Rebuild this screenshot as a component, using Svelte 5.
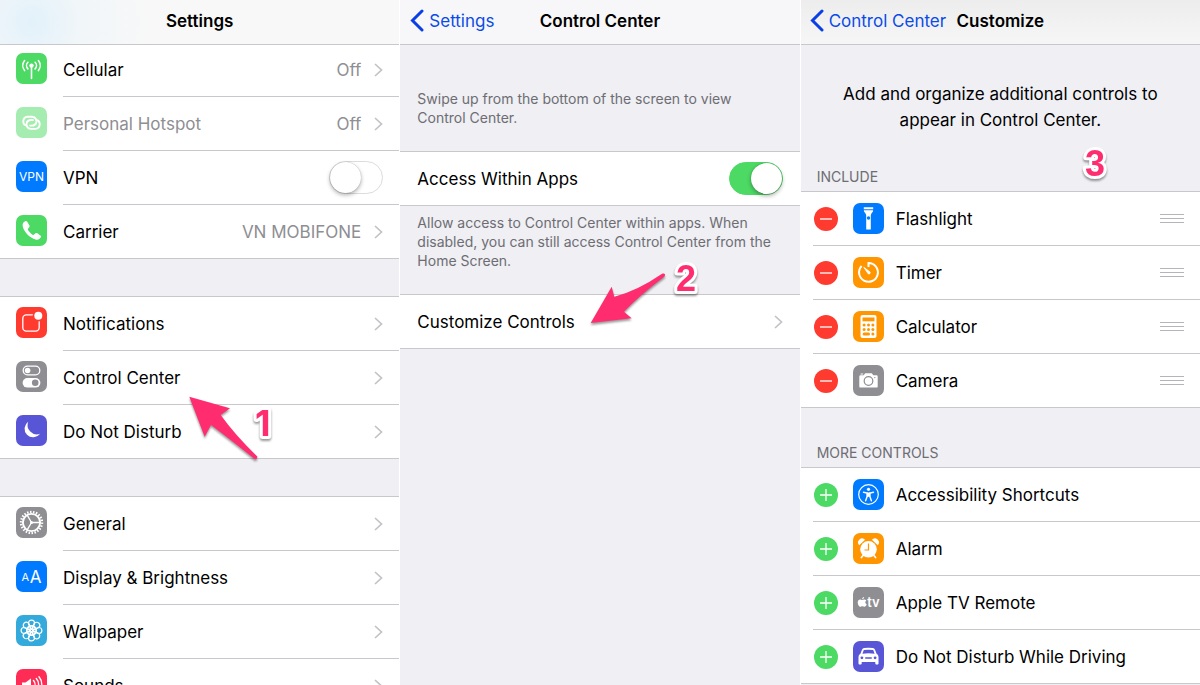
<script>
  const groups = [
    [
      { name: 'Cellular', icon: 'cellular', color: '#4cd964', value: 'Off' },
      { name: 'Personal Hotspot', icon: 'hotspot', color: '#a5ecb1', value: 'Off', dim: true },
      { name: 'VPN', icon: 'vpn', color: '#007aff', toggle: true },
      { name: 'Carrier', icon: 'phone', color: '#4cd964', value: 'VN MOBIFONE' }
    ],
    [
      { name: 'Notifications', icon: 'notifications', color: '#ff3b30' },
      { name: 'Control Center', icon: 'control', color: '#8e8e93' },
      { name: 'Do Not Disturb', icon: 'moon', color: '#5856d6' }
    ],
    [
      { name: 'General', icon: 'gear', color: '#8e8e93' },
      { name: 'Display & Brightness', icon: 'display', color: '#007aff' },
      { name: 'Wallpaper', icon: 'wallpaper', color: '#34aadc' },
      { name: 'Sounds', icon: 'sounds', color: '#ff2d55' }
    ]
  ];

  const included = [
    { name: 'Flashlight', icon: 'flashlight', color: '#007aff' },
    { name: 'Timer', icon: 'timer', color: '#ff9500' },
    { name: 'Calculator', icon: 'calculator', color: '#ff9500' },
    { name: 'Camera', icon: 'camera', color: '#8e8e93' }
  ];

  const more = [
    { name: 'Accessibility Shortcuts', icon: 'accessibility', color: '#007aff' },
    { name: 'Alarm', icon: 'alarm', color: '#ff9500' },
    { name: 'Apple TV Remote', icon: 'appletv', color: '#8e8e93' },
    { name: 'Do Not Disturb While Driving', icon: 'car', color: '#5856d6' }
  ];

  const petals = [0, 45, 90, 135, 180, 225, 270, 315];
  const link = 'M10.6 18.7a4.6 4.6 0 0 1 .9-9h4.6a4.6 4.6 0 0 1 4 6.600q-1.200 2.300-4 2.300h-2';

  let vpn = $state(false);
  let withinApps = $state(true);
</script>

{#snippet glyph(name, color)}
  <svg class="icon" viewBox="0 0 31 31" aria-hidden="true">
    <rect width="31" height="31" rx="7" fill={color} />
    {#if name === 'cellular'}
      <circle cx="15.5" cy="12.6" r="2.2" fill="#fff" />
      <path d="M15.5 13v12.4" class="line" stroke-width="1.6" />
      <path d="M11.900 9.300a4.700 4.700 0 0 0 0 6.600M19.100 9.300a4.700 4.700 0 0 1 0 6.600M8.600 7.600a8 8 0 0 0 0 10M22.400 7.600a8 8 0 0 1 0 10" class="line" stroke-width="1.6" />
    {:else if name === 'hotspot'}
      <g class="line" stroke-width="1.9">
        <path d={link} />
        <path d={link} transform="rotate(180 15.5 15.8)" />
      </g>
    {:else if name === 'vpn'}
      <text x="15.5" y="20" class="glyph-text" font-size="12">VPN</text>
    {:else if name === 'phone'}
      <path d="M9.2 6.300c-2 1-3 2.500-2.500 5 1.200 5.700 7.100 11.800 12.900 13.200 2.500.6 4-.4 5.200-2.200.5-.8.3-1.400-.4-1.900l-3-2.100c-.8-.5-1.500-.5-2.100.1l-1.200 1.200c-.5.5-1 .5-1.600.1-1.800-1.200-3.400-2.900-4.500-4.700-.4-.6-.3-1.100.2-1.600l1-1.100c.5-.6.6-1.200.1-2l-1.900-3.300c-.5-.8-1.300-1.200-2.200-.7z" fill="#fff" />
    {:else if name === 'notifications'}
      <rect x="6.8" y="7.8" width="16.4" height="16.4" rx="3.6" class="line" stroke-width="1.3" />
      <circle cx="22.3" cy="8.8" r="5.6" fill={color} />
      <circle cx="22.3" cy="8.8" r="4" fill="#fff" />
    {:else if name === 'control'}
      <rect x="7.2" y="5.2" width="16.6" height="8.6" rx="4.3" class="line" stroke-width="1.3" />
      <circle cx="11.6" cy="9.5" r="2.8" fill="#fff" />
      <rect x="6.6" y="17" width="17.8" height="9.6" rx="4.8" fill="#fff" />
      <circle cx="19.2" cy="21.8" r="3.3" fill={color} />
    {:else if name === 'moon'}
      <path d="M12.2 6.7a8.600 8.600 0 1 0 11.900 12.100A9.300 9.300 0 0 1 12.200 6.700z" fill="#fff" />
    {:else if name === 'gear'}
      <circle cx="15.5" cy="15.5" r="10.5" class="line teeth" stroke-width="2.4" pathLength="44" stroke-dasharray="1 1" />
      <circle cx="15.5" cy="15.5" r="8.6" class="line" stroke-width="1.900" />
      <path d="M15.5 15.5h8.500M15.5 15.5l-4.300-7.400M15.5 15.5l-4.300 7.400" class="line" stroke-width="1.3" />
      <circle cx="15.5" cy="15.5" r="1.5" fill="#fff" />
    {:else if name === 'display'}
      <text x="9.3" y="20" class="glyph-text" font-size="11">A</text>
      <text x="19.5" y="22" class="glyph-text" font-size="17">A</text>
    {:else if name === 'wallpaper'}
      <g class="line" stroke-width="1.2">
        {#each petals as angle}
          <g transform="rotate({angle} 15.5 15.5)">
            <circle cx="15.5" cy="8.100" r="3" />
            <circle cx="15.5" cy="12" r="1.4" />
          </g>
        {/each}
        <circle cx="15.5" cy="15.5" r="1.2" />
      </g>
    {:else if name === 'sounds'}
      <path d="M6 13.500h3.500l5.500-4v12l-5.500-4H6z" fill="#fff" />
      <path d="M17.500 11.500a6 6 0 0 1 0 8M20.300 9.500a9 9 0 0 1 0 12M23 7.800a12 12 0 0 1 0 15.400" class="line" stroke-width="1.4" />
    {:else if name === 'flashlight'}
      <path d="M10.800 4.200h9.400v2.100h-9.400zM10.800 7.300h9.400c0 2-2.400 3.200-2.400 5.200v14h-4.600v-14c0-2-2.400-3.200-2.400-5.200z" fill="#fff" />
      <circle cx="15.5" cy="15" r="1.7" fill={color} />
    {:else if name === 'timer'}
      <path d="M15.500 10V6a9.400 9.400 0 1 1-6.900 3" class="line teeth" stroke-width="2" />
      <path d="M10.800 10.300l6.200 4.700a1.300 1.300 0 0 1-1.800 1.800z" fill="#fff" stroke="#fff" stroke-width=".8" />
    {:else if name === 'calculator'}
      <rect x="7.5" y="4" width="16" height="23" rx="2" fill="#fff" />
      <g fill={color}>
        <rect x="9.5" y="6.5" width="12" height="3.8" />
        {#each [11.1, 15.5, 19.9] as x}
          <circle cx={x} cy="14" r="1.5" />
          <circle cx={x} cy="18.5" r="1.5" />
        {/each}
        <rect x="9.6" y="21.5" width="7.4" height="3" rx="1.5" />
        <circle cx="19.9" cy="23" r="1.5" />
      </g>
    {:else if name === 'camera'}
      <path d="M7.500 10.200h3.200l1.500-2h6.600l1.500 2h3.200q1.200 0 1.200 1.200v10q0 1.200-1.200 1.200h-16q-1.200 0-1.200-1.200v-10q0-1.200 1.200-1.200z" fill="#fff" />
      <path d="M8 9h1.800" class="line" stroke-width="1" />
      <circle cx="15.5" cy="16" r="4.3" fill="none" stroke={color} stroke-width="1.2" />
      <circle cx="21.8" cy="12.6" r=".7" fill={color} />
    {:else if name === 'accessibility'}
      <circle cx="15.5" cy="15.5" r="9.8" class="line" stroke-width="1.2" />
      <circle cx="15.5" cy="10.3" r="1.6" fill="#fff" />
      <path d="M10.500 13.200l3.700.8v3.300l-1.600 4.500M20.500 13.200l-3.700.8v3.300l1.600 4.500" class="line" stroke-width="1.4" />
      <path d="M13.700 13.500h3.600v4.300h-3.600z" fill="#fff" />
    {:else if name === 'alarm'}
      <circle cx="15.5" cy="16.3" r="8.3" fill="#fff" />
      <path d="M6.200 12.300a4 4 0 0 1 5.900-5.500zM24.800 12.300a4 4 0 0 0-5.900-5.500z" fill="#fff" />
      <path d="M10 22.500l-1.600 2M21 22.500l1.600 2" class="line" stroke-width="1.7" />
      <path d="M15.500 10.500v6.500h-4" fill="none" stroke={color} stroke-width="1.2" />
    {:else if name === 'appletv'}
      <path d="M9.200 12.900c.8 0 1.300-.5 2.200-.5.8 0 1.500.4 1.900 1-1.500.9-1.300 3.200.4 3.800-.4 1.200-1.300 2.600-2.300 2.600-.8 0-1-.5-2-.5s-1.300.5-2 .5c-1.200 0-2.700-2.500-2.700-4.400 0-1.900 1.200-3 2.400-3 .9 0 1.400.5 2.100.5zM9.100 12.300c0-1.200.9-2.200 2-2.300.1 1.200-.8 2.300-2 2.300z" fill="#fff" />
      <text x="20.5" y="20" class="glyph-text" font-size="13" font-weight="600">tv</text>
    {:else if name === 'car'}
      <path d="M9.100 8.500q.6-1.400 2-1.500 4.400-.4 8.800 0 1.400.1 2 1.500l1.700 4.200q1.900 1 1.900 3.300v6.600q0 1-1 1h-1.200q-1 0-1-1v-1.500H8.700v1.500q0 1-1 1H6.500q-1 0-1-1v-6.600q0-2.300 1.900-3.300zM10.800 9l-1.400 3.700q6.100-.7 12.200 0L20.200 9q-4.700-.7-9.400 0z" fill="#fff" fill-rule="evenodd" />
      <g fill={color}>
        <circle cx="8.9" cy="16.8" r="1.400" />
        <circle cx="22.1" cy="16.8" r="1.400" />
        <rect x="12" y="16.2" width="7" height="1.600" rx=".8" />
      </g>
    {/if}
  </svg>
{/snippet}

{#snippet chevron()}
  <svg class="chevron" viewBox="0 0 9 14" aria-hidden="true">
    <path d="M1 1l6.500 6L1 13" fill="none" stroke="#c2c2c7" stroke-width="1.7" />
  </svg>
{/snippet}

{#snippet back(label)}
  <a class="back" href="#back">
    <svg viewBox="0 0 14 23" aria-hidden="true">
      <path d="M12 2L2.500 11.500 12 21" fill="none" stroke="#0a3fe6" stroke-width="3" stroke-linecap="round" />
    </svg>
    <span>{label}</span>
  </a>
{/snippet}

{#snippet controlRow(item, adding)}
  <li class="row control-row">
    <button class="badge" class:adding aria-label="{adding ? 'Add' : 'Remove'} {item.name}">
      <svg viewBox="0 0 24 24" aria-hidden="true">
        <path d={adding ? 'M6 12h12M12 6v12' : 'M6 12h12'} stroke="#fff" stroke-width="1.3" />
      </svg>
    </button>
    {@render glyph(item.icon, item.color)}
    <span class="label">{item.name}</span>
    {#if !adding}
      <button class="grip" aria-label="Reorder {item.name}"><i></i><i></i><i></i></button>
    {/if}
  </li>
{/snippet}

<main>
  <section class="panel settings">
    <header class="bar tinted"><h1>Settings</h1></header>
    {#each groups as group}
      <ul class="group">
        {#each group as item}
          <li>
            {#if item.toggle}
              <label class="row">
                {@render glyph(item.icon, item.color)}
                <span class="cell">
                  <span class="label">{item.name}</span>
                  <input class="switch" type="checkbox" bind:checked={vpn} />
                </span>
              </label>
            {:else}
              <a class="row" class:dim={item.dim} href="#{item.icon}">
                {@render glyph(item.icon, item.color)}
                <span class="cell">
                  <span class="label">{item.name}</span>
                  {#if item.value}<span class="value">{item.value}</span>{/if}
                  {@render chevron()}
                </span>
              </a>
            {/if}
          </li>
        {/each}
      </ul>
    {/each}
    <svg class="mark first" viewBox="0 0 110 80" role="img" aria-label="Step 1">
      <path class="arrow" d="M4.300 6.700L45 18.300 35.700 25Q50 45 72.300 66.500 72.500 69.500 70 69.300 46 50 26 35L19.700 46.700z" />
      <text class="narrow" x="70" y="46">1</text>
    </svg>
  </section>

  <section class="panel">
    <header class="bar">
      {@render back('Settings')}
      <h1>Control Center</h1>
    </header>
    <p class="note intro">Swipe up from the bottom of the screen to view Control Center.</p>
    <div class="group plain">
      <label class="row">
        <span class="label">Access Within Apps</span>
        <input class="switch" type="checkbox" bind:checked={withinApps} />
      </label>
    </div>
    <p class="note">
      Allow access to Control Center within apps. When disabled, you can still access Control
      Center from the Home Screen.
    </p>
    <div class="group plain">
      <a class="row" href="#customize">
        <span class="label">Customize Controls</span>
        {@render chevron()}
      </a>
    </div>
    <svg class="mark second" viewBox="0 0 120 80" role="img" aria-label="Step 2">
      <path class="arrow" d="M5.700 68L46.700 63.300 39 56.700Q55 40 79.500 21.500 81.200 18 77.500 18.500 52 36 29.300 41.700L26.700 31.700z" />
      <text x="91" y="36">2</text>
    </svg>
  </section>

  <section class="panel">
    <header class="bar shaded">
      {@render back('Control Center')}
      <h1>Customize</h1>
    </header>
    <p class="lead">Add and organize additional controls to appear in Control Center.</p>
    <h2>INCLUDE</h2>
    <ul class="group">
      {#each included as item}{@render controlRow(item, false)}{/each}
    </ul>
    <h2>MORE CONTROLS</h2>
    <ul class="group">
      {#each more as item}{@render controlRow(item, true)}{/each}
    </ul>
    <svg class="mark third" viewBox="0 0 40 50" role="img" aria-label="Step 3">
      <text x="11" y="36">3</text>
    </svg>
  </section>
</main>

<style>
  :global(body) {
    margin: 0;
    background: #fff;
  }
  main {
    display: grid;
    grid-template-columns: repeat(3, minmax(0, 1fr));
    gap: 1px;
    height: 100vh;
    overflow: hidden;
    font: 17px/24px Inter, 'Liberation Sans', sans-serif;
    color: #000;
  }
  .panel {
    position: relative;
    overflow: hidden;
    background: #efeff4;
  }
  .bar {
    display: grid;
    grid-template-columns: 1fr auto 1fr;
    align-items: center;
    box-sizing: border-box;
    height: 45px;
    padding: 0 10px 3px;
    border-bottom: 1px solid #c8c8cc;
    background: #f7f7f9;
  }
  .bar.tinted {
    position: relative;
    z-index: 1;
    background: radial-gradient(circle at 32px 22px, #e2f1fa, #f1f6f9 50px, #f8f8f8 120px);
  }
  .bar.shaded {
    background: linear-gradient(#ededee, #f6f6f7);
  }
  h1 {
    grid-column: 2;
    margin: 0;
    font-size: 17px;
    font-weight: 600;
  }
  .back {
    display: flex;
    align-items: center;
    gap: 5px;
    color: #0a4be8;
    text-decoration: none;
    white-space: nowrap;
  }
  .shaded .back {
    margin-left: -1px;
  }
  .back svg {
    flex: none;
    width: 14px;
    height: 23px;
  }
  .group {
    margin: 0 0 37px;
    padding: 0;
    list-style: none;
    border-top: 1px solid #c8c8cc;
    background: #fff;
  }
  .bar.tinted + .group {
    margin-top: -3px;
  }
  .row {
    display: flex;
    align-items: center;
    box-sizing: border-box;
    height: 54px;
    color: inherit;
    text-decoration: none;
  }
  .settings .row {
    padding-left: 16px;
    gap: 16px;
  }
  .cell {
    display: flex;
    flex: 1;
    align-items: center;
    box-sizing: border-box;
    height: 54px;
    padding-right: 16px;
    border-bottom: 1px solid #c8c8cc;
  }
  .settings li:last-child .row {
    border-bottom: 1px solid #c8c8cc;
  }
  .settings li:last-child .cell {
    height: 53px;
    border: 0;
  }
  .label {
    flex: 1;
    white-space: nowrap;
  }
  .value {
    margin-right: 13px;
    color: #8e8e93;
  }
  .dim .label {
    color: #8e8e93;
  }
  .icon {
    flex: none;
    width: 31px;
    height: 31px;
  }
  .settings .icon {
    margin-bottom: 3px;
  }
  .line {
    fill: none;
    stroke: #fff;
    stroke-linecap: round;
  }
  .teeth {
    stroke-linecap: butt;
  }
  .glyph-text {
    fill: #fff;
    text-anchor: middle;
    font-family: Inter, sans-serif;
  }
  .chevron {
    flex: none;
    width: 9px;
    height: 14px;
  }
  .switch {
    appearance: none;
    flex: none;
    box-sizing: border-box;
    width: 54px;
    height: 33px;
    margin: 0;
    border: 1px solid #dcdcdf;
    border-radius: 17px;
    background: #fff;
  }
  .switch::before {
    content: '';
    display: block;
    width: 31px;
    height: 31px;
    border-radius: 50%;
    background: #fff;
    box-shadow: 0 0 1px #00000050, 0 2px 4px #00000050;
  }
  .switch:checked {
    border-color: #4cd964;
    background: #4cd964;
  }
  .switch:checked::before {
    margin-left: 21px;
  }
  .plain {
    margin: 0;
    border-bottom: 1px solid #c8c8cc;
  }
  .plain .row {
    height: 53px;
    padding: 0 17px;
  }
  .note {
    margin: 0;
    padding: 7px 17px 24px;
    font-size: 14px;
    line-height: 19px;
    color: #6d6d72;
  }
  .intro {
    padding-top: 44px;
    padding-bottom: 24px;
  }
  .lead {
    margin: 0;
    padding: 36px 36px 34px;
    line-height: 26px;
    text-align: center;
  }
  h2 {
    margin: 0;
    padding: 0 16px 4px;
    font-size: 14px;
    font-weight: 400;
    line-height: 20px;
    color: #6d6d72;
  }
  .control-row {
    margin-left: 12px;
    padding: 0 16px 0 1px;
    border-bottom: 1px solid #c8c8cc;
  }
  .control-row:last-child {
    margin-left: 0;
    padding-left: 13px;
  }
  .control-row .label {
    margin-left: 12px;
  }
  ul:has(.control-row) {
    margin-bottom: 35px;
  }
  .badge {
    flex: none;
    width: 24px;
    height: 24px;
    margin-right: 15px;
    padding: 0;
    border: 0;
    border-radius: 50%;
    background: #ff3b30;
  }
  .badge.adding {
    background: #4cd964;
  }
  .badge svg {
    display: block;
  }
  .grip {
    display: grid;
    gap: 3px;
    width: 24px;
    padding: 0;
    border: 0;
    background: none;
  }
  .grip i {
    height: 1px;
    background: #b4b4ba;
  }
  .mark {
    position: absolute;
    z-index: 2;
    overflow: visible;
    pointer-events: none;
    filter: drop-shadow(0 2px 1px #00000066);
  }
  .mark text {
    font: bold 36px 'Liberation Sans', sans-serif;
    fill: #ff2d6f;
    stroke: #fff;
    stroke-width: 6px;
    stroke-linejoin: round;
    paint-order: stroke;
  }
  .mark .narrow {
    font-family: Inter, sans-serif;
  }
  .arrow {
    fill: #ff2d6f;
  }
  .first {
    left: 185px;
    top: 390px;
    width: 110px;
  }
  .second {
    left: 185px;
    top: 255px;
    width: 120px;
  }
  .third {
    left: 273px;
    top: 140px;
    width: 40px;
  }
</style>
